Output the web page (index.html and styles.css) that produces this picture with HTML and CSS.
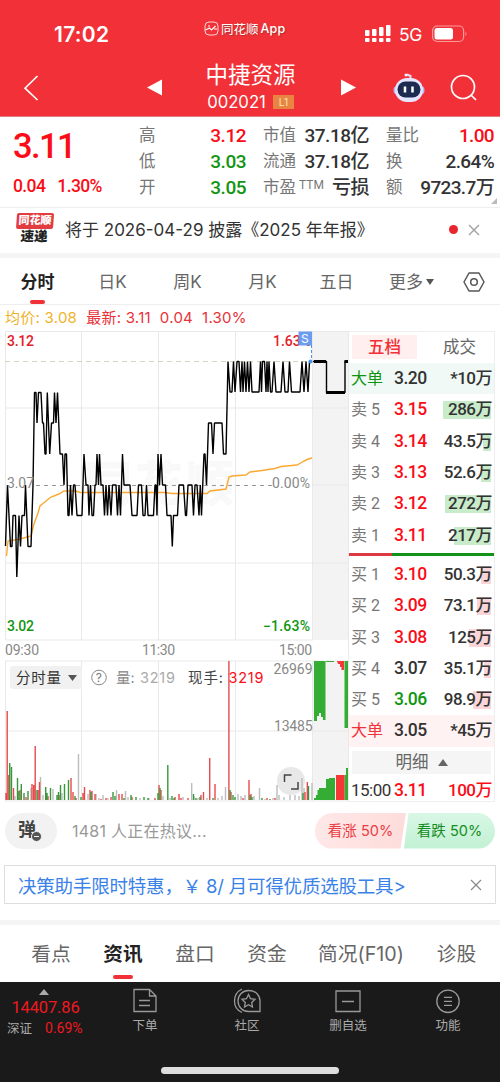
FILE: index.html
```html
<!DOCTYPE html>
<html lang="zh-CN">
<head>
    <meta charset="UTF-8">
    <meta name="viewport" content="width=device-width, initial-scale=1.0">
    <title>中捷资源 002021</title>
    <link rel="stylesheet" href="styles.css">
</head>
<body>
    <header class="header">
        <div class="status-bar">
            <span class="time">17:02</span>
            <span class="app-name">
                <svg width="15" height="15" viewBox="0 0 15 15" fill="none" stroke="#fff"><rect x="1" y="1" width="13" height="13" rx="4" stroke-width=".8"/><path d="M1.5 9l4-2 2 2 4-4M4 5h2M10 8h3" stroke-width="1.2"/></svg>
                同花顺<b>App</b>
            </span>
            <span class="signal">
                <svg width="26" height="18" viewBox="0 0 26 18" fill="#fff"><rect x="0" y="5" width="4.5" height="6" rx="1"/><rect x="7" y="4" width="4.5" height="7" rx="1"/><rect x="14" y="2" width="4.5" height="9" rx="1"/><rect x="21" y="0" width="4.5" height="11" rx="1"/><rect x="0" y="13" width="4.5" height="4" rx="1"/><rect x="7" y="13" width="4.5" height="4" rx="1"/><rect x="14" y="13" width="4.5" height="4" rx="1"/><rect x="21" y="13" width="4.5" height="4" rx="1"/></svg>
                <span class="net">5G</span>
                <svg width="36" height="18" viewBox="0 0 36 18"><rect x=".6" y="1" width="31" height="15.5" rx="4.5" fill="none" stroke="#f99a9d" stroke-width="1.2"/><rect x="2.5" y="3" width="18.5" height="11.5" rx="2.5" fill="#fff"/><path d="M33.5 6.5q2 2.3 0 4.6z" fill="#f99a9d"/></svg>
            </span>
        </div>
        <div class="nav">
            <svg class="back" width="16" height="28" viewBox="0 0 16 28" fill="none" stroke="#fff" stroke-width="1.6"><path d="M14.5 2L2 14.2 14.5 26"/></svg>
            <svg class="prev" width="15" height="17" viewBox="0 0 15 17" fill="#fff"><path d="M0 8.5L15 .5v16z"/></svg>
            <div class="stock">
                <h1>中捷资源</h1>
                <div class="code">002021<span>L1</span></div>
            </div>
            <svg class="next" width="15" height="17" viewBox="0 0 15 17" fill="#fff"><path d="M15 8.5L0 .5v16z"/></svg>
            <svg class="robot" width="32" height="30" viewBox="0 0 32 30"><path d="M17.5 6V3L14 1.5" fill="none" stroke="#e9dcfb" stroke-width="2"/><circle cx="13" cy="2" r="1.5" fill="#f6f3ff"/><rect x=".5" y="13" width="31" height="8.5" rx="4" fill="#bfb4fa"/><rect x="2" y="5" width="28" height="24" rx="12" fill="#e5e5ff"/><rect x="4.5" y="8.5" width="23" height="16" rx="8" fill="#1d2b50"/><path d="M12 13.5v6M19.5 13.5v6" stroke="#fff" stroke-width="2.5"/></svg>
            <svg class="search" width="28" height="28" viewBox="0 0 28 28" fill="none" stroke="#fff" stroke-width="1.7"><circle cx="13" cy="13" r="11.5"/><path d="M21 21l5 5"/></svg>
        </div>
    </header>

    <section class="quote">
        <div class="price">
            <div class="last">3.11</div>
            <div class="change"><span>0.04</span><span>1.30%</span></div>
        </div>
        <dl class="col-a">
            <dt>高</dt><dd class="red">3.12</dd>
            <dt>低</dt><dd class="green">3.03</dd>
            <dt>开</dt><dd class="green">3.05</dd>
        </dl>
        <dl class="col-b">
            <dt>市值</dt><dd>37.18亿</dd>
            <dt>流通</dt><dd>37.18亿</dd>
            <dt>市盈<sup>TTM</sup></dt><dd>亏损</dd>
        </dl>
        <dl class="col-c">
            <dt>量比</dt><dd class="red">1.00</dd>
            <dt>换</dt><dd>2.64%</dd>
            <dt>额</dt><dd>9723.7万</dd>
        </dl>
        <i class="corner"></i>
    </section>

    <section class="notice">
        <div class="badge"><b>同花顺</b><em>速递</em></div>
        <p>将于<span> 2026-04-29 </span>披露《2025<span> </span>年年报》</p>
        <i class="dot"></i>
        <svg width="12" height="12" viewBox="0 0 12 12" stroke="#a0a0a0" stroke-width="1.4"><path d="M1 1l10 10M11 1L1 11"/></svg>
    </section>

    <nav class="periods">
        <span class="active">分时</span>
        <span>日K</span>
        <span>周K</span>
        <span>月K</span>
        <span>五日</span>
        <span class="more">更多<i></i></span>
        <svg width="22" height="20" viewBox="0 0 22 20" fill="none" stroke="#555" stroke-width="1.5"><path d="M6 1h10l5 9-5 9H6l-5-9z" stroke-linejoin="round"/><circle cx="11" cy="10" r="3.3"/></svg>
    </nav>

    <div class="legend"><span class="avg">均价: 3.08</span><span>最新: 3.11</span><span>0.04</span><span>1.30%</span></div>

    <main class="market">
        <svg class="chart" width="349" height="472" viewBox="0 331 349 472">
            <!-- after-hours column -->
            <path d="M312.5 331H349v309h-36.5zM312.5 661H349v139h-36.5z" fill="#f3f3f4"/>
            <g fill="#f9f9f9" font-size="48" font-weight="900"><text x="84" y="501" textLength="150">同花顺</text></g>
            <g fill="none" stroke="#e9e9e9">
                <path d="M5 331.5h344M5 640h308M5 661h344M5 801h344M5.5 331v309M5.5 661v140M312.5 331v309M312.5 661v140M348.5 331v470"/>
                <path d="M81.5 331v309M158.5 331v309M235.5 331v309M5 408h344M5 563h344M81.5 661v140M158.5 661v140M235.5 661v140M5 731h344"/>
            </g>
            <path d="M5 361.5h306" stroke="#d3d6ba" stroke-dasharray="5 4"/>
            <path d="M36 485.5h236" stroke="#999" stroke-dasharray="4 4"/>
            <path d="M312 485h37" stroke="#e9e9e9"/>

            <path class="average" d="M6.5 556L8 541 20 539 31 536 34 524 38 513 40 506 46 501 51 497 59 494 64 491H76L80 492.5H165L172 493.5H207L210 491 226 489 229 477 232 476 246 475 250 472 262 470.5 275 468.5 281 466.5 297 465 303 461.5 307 459.5 312 458"/>
            <path class="price-line" d="M5.5 546L7.5 485 10.5 546.5H12L13 515.5H15.5L16.8 577 19 515.5 20.5 546.5 22 515.5H24.5L25.5 485 28 546.5H31L33 485 34.5 392.5H36L37 423 38.5 392.5H41L42.5 423H43.5L45 454H46L47.3 392.5 49.7 454 51.5 423H53.5L54.5 392.5 56 423 57.5 392.5 60 454H62.5L64 485 65 454H66.5L68 515.5H69L70.5 485 72 515.5 73.5 485H75L77 515.5H82L84 454 86 485H88L89 515.5 90.5 485 92 515.5H93.5L95 485H96L97 454 98.5 485 99.5 454 101 485H103L104.5 515.5 106 485 107.5 515.5 109 485 111 515.5 112.5 485 114 485 116 485 117.5 515.5 119 485 120.5 515.5 122.5 454 124 485H130L132 515.5H137L138.5 485H141.5L143 515.5H145L146.5 485 148 515.5H153.5L155 485H156L157 515.5 158 454 159.5 485 161 454 162.5 485H165.5L167 515.5H171L172.3 546.5 173.5 515.5H177.5L179 485H183.5L185.5 515.5H186.5L188 485H192L193.5 515.5 195 485H197L199 515.5 200.3 485 201.5 515.5 204 454H205L206.5 485 208.5 423H211.5L213 454 214.5 423H222L223.5 454H226L228 361.5 230 392H232L233.5 361.5 235 392 237 361.5H239L240.5 392 242 361.5 243 392 244.5 361.5 246 392 247.5 361.5 249 392 250.5 361.5 252 392H259L260.5 361.5 261.5 392 262.5 361.5H264.5L266 392 267 361.5 268 392 269 361.5 270.5 392H272L274 361.5 276 392H281L283 361.5 285 392H288L289.5 361.5 291.5 392H300L302 361.5 304 392 306 361.5 308 392 309.5 361.5"/>
            <path class="price-line" d="M313 361.5H326.5V392.5H345V361.5H348"/>
            <path d="M314 361.5h12M326 392.5h19M344.5 361.5h3.5" stroke="#000" stroke-width="3"/>
            <path d="M311.5 345v16" stroke="#4a90f5" stroke-dasharray="3 2"/>
            <circle cx="310.5" cy="361.5" r="2" fill="#4a90f5"/>

            <g class="scale">
                <text x="7" y="346" class="up" textLength="27">3.12</text>
                <text x="273" y="346" class="up" textLength="38">1.63%</text>
                <text x="7" y="488" textLength="27">3.07</text>
                <text x="272" y="488" textLength="38">0.00%</text>
                <text x="7" y="631" class="down" textLength="27">3.02</text>
                <text x="263" y="631" class="down" textLength="47">−1.63%</text>
                <text x="5" y="655" textLength="34">09:30</text>
                <text x="142" y="655" textLength="33">11:30</text>
                <text x="279" y="655" textLength="33">15:00</text>
            </g>
            <rect x="298.5" y="331.5" width="13.5" height="14" fill="#6a9df2"/>
            <text x="301" y="343" fill="#fff" font-size="12">S</text>

            <!-- volume -->
            <rect x="10" y="666" width="72" height="23" rx="3" fill="#f1f1f1"/>
            <g class="volume-head">
                <text x="16" y="683" fill="#333" textLength="45">分时量</text>
                <path d="M68 675h9l-4.5 6z" fill="#555"/>
                <circle cx="99" cy="677.5" r="7.3" fill="none" stroke="#888"/>
                <text x="95.7" y="682" fill="#777" font-size="12">?</text>
                <text x="116" y="683" fill="#888">量:</text>
                <text x="140" y="683" fill="#aaa" textLength="35">3219</text>
                <text x="188" y="683" fill="#444" textLength="35">现手:</text>
                <text x="228.5" y="683" fill="#fa0d17" textLength="35">3219</text>
            </g>
            <g class="scale">
                <text x="273.5" y="674" textLength="39">26969</text>
                <text x="274" y="731" textLength="38.5">13485</text>
            </g>
            <circle cx="291" cy="781" r="14" fill="#e8e8e8"/>
            <path d="M284.5 782v-7h7M298 782v7h-7" fill="none" stroke="#444" stroke-width="1.5"/>
            <path class="vol flat" d="M15 800v-4M31 800v-12M40.5 800v-23M43 800v-5M53 800v-11M62 800v-7M78.5 800v-46M88 800v-6M96 800v-6M99 800v-2M103 800v-5M108 800v-2M116.5 800v-10M125.5 800v-9M128 800v-3M140 800v-2M149 800v-2M163 800v-4M170 800v-2M183 800v-3M191.7 800v-17M194 800v-4M198 800v-2M207 800v-2M218 800v-2M222 800v-4M225.5 800v-13M238 800v-6M241 800v-4M245 800v-5M254 800v-4M259.5 800v-12M265 800v-1M273 800v-2M277 800v-15M279 800v-5M284 800v-3M290 800v-5M295 800v-5M299 800v-4M302 800v-22M304 800v-12M312 800v-17"/>
            <path class="vol buy" d="M6 800v-7M7.2 800v-89M8.8 800v-25M13.5 800v-12M20 800v-10M26 800v-3M32 800v-16M33.7 800v-15M35.2 800v-54M38 800v-10M39.5 800v-18M48 800v-4M59 800v-5M71 800v-22M73 800v-8M76 800v-2M83 800v-7M84.5 800v-13M90 800v-10M92 800v-9M95 800v-6M101 800v-1M106 800v-2M111 800v-3M119 800v-6M122 800v-6M132 800v-3M155 800v-2M159 800v-15M161 800v-10M175 800v-3M179 800v-6M181 800v-2M188 800v-2M201 800v-5M203.5 800v-8M209.7 800v-42M215 800v-16M228.9 800V661M231 800v-8M243 800v-2M249 800v-20M251 800v-6M267 800v-2M275 800v-2M305 800v-8M307.3 800v-18"/>
            <path class="vol sell" d="M9.7 800v-37M11.5 800v-33M17.5 800v-22M19 800v-9M21.3 800v-16M24 800v-7M28 800v-9M37 800v-10M45.7 800v-13M47 800v-7M50.5 800v-12M57 800v-5M58.5 800v-8M60.5 800v-15M64.5 800v-16M68.5 800v-20M75 800v-4M81 800v-3M91 800v-8M113 800v-8M115 800v-4M124 800v-2M131 800v-5M136 800v-3M144 800v-3M148 800v-2M158 800v-7M160 800v-12M167.8 800v-35M172 800v-4M174 800v-2M193.5 800v-6M196 800v-2M200 800v-3M213 800v-2M230 800v-10M233 800v-5M235 800v-3M250 800v-5M252 800v-3M262 800v-2M270 800v-1M303 800v-7M308.5 800v-14"/>
            <g fill="#35ad35">
                <path d="M314 661h11.5v59H323v-3h-2v-4h-2v3h-2v5h-3zM326 661h8v1h-8zM344.5 661h3.5v67h-3.5z"/>
                <path d="M314 800v-2h2v-3h1.5v-5h1.5v-2h7v-9h3v-1h6v22zM344.5 800v-25h1.5v-7h2v32z"/>
            </g>
            <path d="M337 661h7v9h-2.5v-3H340v-3h-2zM336 775h8.5v25H336z" fill="#f43737"/>
        </svg>

        <section class="book">
            <div class="book-tabs"><span class="active">五档</span><span>成交</span></div>
            <div class="row big sell-big"><span>大单</span><b>3.20</b><em>*10万</em></div>
            <div class="row ask"><span>卖 5</span><b class="red">3.15</b><em><i style="width: 48px"></i>286万</em></div>
            <div class="row ask"><span>卖 4</span><b class="red">3.14</b><em><i style="width: 8px"></i>43.5万</em></div>
            <div class="row ask"><span>卖 3</span><b class="red">3.13</b><em><i style="width: 10px"></i>52.6万</em></div>
            <div class="row ask"><span>卖 2</span><b class="red">3.12</b><em><i style="width: 46px"></i>272万</em></div>
            <div class="row ask"><span>卖 1</span><b class="red">3.11</b><em><i style="width: 37px"></i>217万</em></div>
            <div class="ratio"></div>
            <div class="row bid"><span>买 1</span><b class="red">3.10</b><em><i style="width: 10px"></i>50.3万</em></div>
            <div class="row bid"><span>买 2</span><b class="red">3.09</b><em><i style="width: 14px"></i>73.1万</em></div>
            <div class="row bid"><span>买 3</span><b class="red">3.08</b><em><i style="width: 22px"></i>125万</em></div>
            <div class="row bid"><span>买 4</span><b>3.07</b><em><i style="width: 7px"></i>35.1万</em></div>
            <div class="row bid"><span>买 5</span><b class="green">3.06</b><em><i style="width: 18px"></i>98.9万</em></div>
            <div class="row big buy-big"><span>大单</span><b>3.05</b><em>*45万</em></div>
            <div class="detail">明细<i></i></div>
            <div class="row tick"><span>15:00</span><b class="red">3.11</b><em class="red">100万</em></div>
        </section>
    </main>

    <section class="talk">
        <div class="danmu">弹<i></i></div>
        <p>1481<span> </span>人正在热议...</p>
        <div class="vote"><span class="rise">看涨 50%</span><span class="fall">看跌 50%</span></div>
    </section>

    <section class="promo">
        <span>决策助手限时特惠，￥ 8/ 月可得优质选股工具&gt;</span>
        <svg width="12" height="12" viewBox="0 0 12 12" stroke="#888" stroke-width="1.2"><path d="M1 1l10 10M11 1L1 11"/></svg>
    </section>

    <nav class="sections">
        <span>看点</span>
        <span class="active">资讯</span>
        <span>盘口</span>
        <span>资金</span>
        <span>简况(F10)</span>
        <span>诊股</span>
    </nav>

    <footer class="footer">
        <div class="tools">
            <div class="index">
                <i></i>
                <strong>14407.86</strong>
                <div><span>深证</span><b>0.69%</b></div>
            </div>
            <div class="tool">
                <svg width="26" height="26" viewBox="0 0 26 26"><path d="M2 1.5h15.5l6.5 6.5v15.5H2zM17.5 1.5v6.5h6.5M7 12.5h11M7 17.5h11"/></svg>
                <span>下单</span>
            </div>
            <div class="tool">
                <svg width="28" height="26" viewBox="0 0 28 26"><path d="M15.5 2.5C23 2.5 27 7.5 27 13v10.5H15.5a10.5 10.5 0 010-21zM9 1C-1 6-1 20 9 24.5M15.5 6.5l2 4.2 4.5.6-3.3 3.2.8 4.5-4-2.2-4 2.2.8-4.5L9 11.3l4.5-.6z"/></svg>
                <span>社区</span>
            </div>
            <div class="tool">
                <svg width="26" height="26" viewBox="0 0 26 26"><path d="M1 3h24v20.5H1zM7 13.5h12"/></svg>
                <span>删自选</span>
            </div>
            <div class="tool">
                <svg width="26" height="26" viewBox="0 0 26 26"><circle cx="13" cy="13.3" r="11.2"/><path d="M9 9.3h8M9 13.3h8M9 17.3h8"/></svg>
                <span>功能</span>
            </div>
        </div>
        <div class="home-bar"></div>
    </footer>
</body>
</html>
```

FILE: styles.css
```css
* {
    box-sizing: border-box;
}
body {
    width: 500px;
    height: 1083px;
    margin: 0;
    overflow: hidden;
    background: #fff;
    color: #333;
    font-family: Inter, "Noto Sans CJK SC", sans-serif;
    font-size: 16px;
}
h1, p, dl, dd {
    margin: 0;
}
i, em {
    font-style: normal;
}
svg {
    display: block;
    flex: none;
}
.red {
    color: #fa0d17;
}
.green {
    color: #109510;
}

/* header */
.header {
    height: 117px;
    background: #f23037;
    color: #fff;
    border-bottom: 1px solid #e08085;
}
.status-bar {
    display: grid;
    grid-template-columns: 204px 161px 1fr;
    height: 59px;
    padding-top: 9px;
    align-items: center;
}
.time {
    padding-left: 54px;
    font-size: 21px;
    font-weight: 600;
    letter-spacing: .3px;
}
.app-name {
    display: flex;
    align-items: center;
    gap: 2px;
    font-size: 12.5px;
    margin-top: -11px;
    text-shadow: 1px 1px 1px #a33;
}
.app-name b {
    font-weight: 500;
    letter-spacing: .2px;
}
.signal {
    display: flex;
    align-items: center;
}
.net {
    width: 25px;
    margin: 0 8px;
    font-size: 17.5px;
    letter-spacing: -.3px;
}
.nav {
    display: grid;
    grid-template-columns: 124px 55px 143px 70px 58px 1fr;
    height: 57px;
    align-items: center;
}
.back {
    margin-left: 23px;
}
.prev {
    margin-left: 23px;
}
.next {
    margin-left: 19px;
}
.robot {
    margin-left: 1px;
}
.stock {
    text-align: center;
}
.stock h1 {
    font-size: 22.5px;
    line-height: 29px;
    font-weight: 400;
}
.code {
    display: flex;
    justify-content: center;
    align-items: center;
    gap: 7px;
    font-size: 16.7px;
    line-height: 26px;
}
.code span {
    width: 21px;
    height: 14px;
    background: #e88543;
    color: #ffe4b0;
    font-size: 10px;
    line-height: 14px;
}

/* quote */
.quote {
    position: relative;
    display: grid;
    grid-template-columns: 139px 107px 123px 125px;
    height: 91px;
    padding-top: 6px;
    border-bottom: 1px solid #eee;
    font-family: Roboto, "Noto Sans CJK SC", sans-serif;
}
.price {
    padding-left: 13px;
    color: #fa0d17;
    font-weight: 500;
}
.last {
    height: 48px;
    font-size: 34.5px;
    line-height: 47px;
    letter-spacing: -1.6px;
}
.change {
    display: flex;
    gap: 12px;
    font-size: 17.5px;
    line-height: 30px;
    letter-spacing: -.6px;
}
.quote dl {
    display: grid;
    grid-template-columns: 34px 1fr;
    grid-template-rows: repeat(3, 26px);
    line-height: 26px;
}
.quote dt {
    font-size: 16.5px;
    color: #777;
    white-space: nowrap;
}
.quote dd {
    font-size: 19px;
    font-weight: 500;
    text-align: right;
    letter-spacing: -.5px;
    white-space: nowrap;
}
.quote .col-b, .quote .col-c {
    padding-left: 17px;
}
.quote sup {
    font-size: 12px;
    line-height: 0;
    margin-left: 3px;
    vertical-align: 4px;
}
.quote .col-c dd {
    letter-spacing: -.65px;
}
.corner {
    position: absolute;
    right: 3px;
    bottom: 3px;
    border: 3px solid;
    border-color: transparent #bbb #bbb transparent;
}

/* notice */
.notice {
    display: flex;
    align-items: center;
    height: 50px;
    padding: 0 20px 5px 16px;
    border-bottom: 5px solid #f5f5f6;
}
.badge {
    width: 37px;
    text-align: center;
    transform: skewX(-4deg);
}
.badge b, .badge em {
    display: block;
    font-weight: 900;
    line-height: 15px;
}
.badge b {
    height: 16px;
    background: #e23b40;
    border-radius: 2px;
    color: #fff;
    font-size: 11px;
}
.badge em {
    font-size: 13.5px;
    color: #222;
}
.notice p {
    flex: 1;
    margin-left: 12px;
    font-size: 17px;
    white-space: nowrap;
}
.dot {
    width: 9px;
    height: 9px;
    border-radius: 50%;
    background: #e8252d;
    margin: 2px 10px 0 0;
}
.notice svg {
    margin-top: 3px;
}

/* period tabs */
.periods {
    display: grid;
    grid-template-columns: 75px 75px 75px 75px 73px 77px 1fr;
    align-items: center;
    height: 47px;
    border-bottom: 1px solid #eee;
    text-align: center;
    font-size: 17px;
    color: #666;
}
.periods span {
    position: relative;
    line-height: 46px;
    padding-top: 1px;
}
.periods svg {
    margin-left: 13px;
}
.periods .active, .sections .active {
    color: #222;
    font-weight: 600;
}
.periods .active::after, .sections .active::after {
    content: "";
    position: absolute;
    left: 30px;
    bottom: 1px;
    width: 15px;
    height: 4px;
    border-radius: 2px;
    background: #f23037;
}
.more i {
    display: inline-block;
    margin: 0 0 3px 3px;
    border: 4.5px solid transparent;
    border-top: 6px solid #555;
    border-bottom: 0;
}
.legend {
    display: flex;
    height: 26px;
    padding-left: 5px;
    font-size: 15px;
    line-height: 26px;
    letter-spacing: .25px;
    color: #e83239;
    gap: 9px;
}
.avg {
    color: #eeb32c;
}

/* chart */
.market {
    display: flex;
    height: 471px;
}
.chart text {
    font-family: Inter, "Noto Sans CJK SC", sans-serif;
}
.chart .price-line {
    fill: none;
    stroke: #000;
    stroke-width: 1.4;
    stroke-linejoin: bevel;
}
.chart .average {
    fill: none;
    stroke: #f9a933;
    stroke-width: 1.4;
}
.chart .scale text {
    font: 14px Roboto, sans-serif;
    fill: #888;
}
.chart .scale .up {
    fill: #e3202a;
    font-weight: 500;
}
.chart .scale .down {
    fill: #109510;
    font-weight: 500;
}
.volume-head {
    font-size: 14.5px;
}
.vol {
    stroke-width: 1.4;
}
.vol.flat {
    stroke: #bcbcbc;
}
.vol.buy {
    stroke: #e84a4d;
}
.vol.sell {
    stroke: #37983b;
}

/* order book */
.book {
    width: 146px;
    border: 1px solid #eee;
    border-left: 0;
    font-family: Roboto, "Noto Sans CJK SC", sans-serif;
}
.book-tabs {
    display: flex;
    height: 31px;
    padding: 3px 0 0 3px;
    color: #666;
    font-size: 16.5px;
    line-height: 25px;
    text-align: center;
}
.book-tabs span {
    width: 65px;
    height: 24px;
    margin-right: 10px;
}
.book-tabs span + span {
    margin-right: 0;
}
.book-tabs .active {
    background: #ffefef;
    color: #f23037;
    font-weight: 500;
}
.row {
    display: grid;
    grid-template-columns: 43px 39px 1fr;
    align-items: center;
    height: 31.3px;
    padding: 0 2px;
    line-height: 31px;
    white-space: nowrap;
    color: #333;
}
.row span {
    font-size: 16px;
    color: #777;
}
.row b {
    font-size: 17.5px;
    font-weight: 500;
    letter-spacing: -.5px;
}
.row em {
    position: relative;
    z-index: 0;
    font-size: 17px;
    font-weight: 500;
    text-align: right;
    letter-spacing: -.5px;
}
.row em i {
    position: absolute;
    z-index: -1;
    right: 1px;
    top: 7px;
    height: 18px;
}
.ask i {
    background: #c8ebca;
}
.bid i {
    background: #fbd5d7;
}
.sell-big {
    background: #f0f9f5;
}
.row.sell-big span {
    color: #109510;
}
.buy-big {
    background: #fef2f2;
}
.row.buy-big span {
    color: #f23037;
}
.ratio {
    height: 3px;
    margin: 2px 0 3px;
    background: linear-gradient(90deg, #dc3a43 43px, #139218 43px);
}
.detail {
    height: 23px;
    margin: 4px 3px;
    background: #f5f5f5;
    color: #666;
    font-size: 16.5px;
    line-height: 23px;
    text-align: center;
}
.detail i {
    display: inline-block;
    margin: 0 0 2px 9px;
    border: 5px solid transparent;
    border-bottom: 7px solid #666;
    border-top: 0;
}
.row.tick {
    height: 24px;
    line-height: 24px;
}
.row.tick span {
    color: #333;
    font-size: 17px;
    letter-spacing: -.5px;
}
.row .red {
    color: #fa0d17;
}
.row .green {
    color: #109510;
}

/* discussion */
.talk {
    display: flex;
    align-items: center;
    height: 63px;
    padding: 0 5px 6px;
}
.danmu {
    position: relative;
    width: 52px;
    height: 36px;
    border-radius: 18px;
    background: #f2f2f2;
    padding-left: 13px;
    font-size: 18px;
    font-weight: 700;
    line-height: 33px;
    color: #444;
}
.danmu i {
    position: absolute;
    left: 26px;
    top: 18px;
    width: 11px;
    height: 11px;
    border: 1px solid #f2f2f2;
    border-radius: 50%;
    background: linear-gradient(#f2f2f2, #f2f2f2) center / 5px 1px no-repeat #555;
}
.talk p {
    flex: 1;
    margin: -2px 0 0 15px;
    font-size: 16px;
    letter-spacing: .25px;
    color: #999;
}
.vote {
    display: flex;
    gap: 3px;
    border-radius: 18px;
    overflow: hidden;
    font-size: 14.5px;
    line-height: 36px;
    white-space: nowrap;
}
.rise, .fall {
    height: 36px;
    width: 91px;
    text-align: center;
}
.rise {
    background: linear-gradient(100deg, #ffe8e8, #fddcda);
    color: #eb3d43;
    clip-path: polygon(0 0, 100% 0, 94% 100%, 0 100%);
}
.fall {
    margin-left: -5px;
    background: linear-gradient(#d9f7e5, #c1f1d3);
    color: #158d22;
    clip-path: polygon(5% 0, 100% 0, 100% 100%, 0 100%);
}
.promo {
    display: flex;
    justify-content: space-between;
    align-items: center;
    height: 39px;
    margin: 0 4px 16px;
    padding: 0 13px;
    border: 1px solid #dedede;
    color: #3a82e8;
    font-size: 18.5px;
    letter-spacing: -.2px;
    white-space: nowrap;
}

/* section tabs */
.sections {
    display: grid;
    grid-template-columns: 72px 72px 72px 72px 116px 1fr;
    height: 62px;
    padding: 0 6px 0 15px;
    border-top: 5px solid #f5f5f6;
    text-align: center;
    font-size: 19.7px;
    line-height: 58px;
    color: #666;
}
.sections span {
    position: relative;
    white-space: nowrap;
}
.sections .active::after {
    left: 26px;
    bottom: 4px;
    width: 20px;
}

/* footer */
.footer {
    height: 100px;
    background: #1a1a1a;
    color: #aaa;
}
.tools {
    display: grid;
    grid-template-columns: 94px 102px 102px 100px 100px;
    height: 84px;
}
.index {
    text-align: center;
    color: #f01820;
    font-family: Roboto, "Noto Sans CJK SC", sans-serif;
}
.index > i {
    display: block;
    width: 0;
    margin: 7px auto 0 39px;
    border: 5.5px solid transparent;
    border-bottom: 6px solid #aaa;
    border-top: 0;
}
.index strong {
    display: block;
    padding-right: 3px;
    font-size: 16.5px;
    font-weight: 400;
    line-height: 26px;
    letter-spacing: -.15px;
}
.index div {
    display: flex;
    gap: 13px;
    padding-left: 7px;
    font-size: 14px;
    line-height: 15px;
}
.index span {
    font-size: 12.5px;
    color: #aaa;
}
.index b {
    font-weight: 400;
}
.tool {
    display: flex;
    flex-direction: column;
    align-items: center;
    padding-top: 6px;
    font-size: 12.5px;
    line-height: 23px;
}
.tool svg {
    fill: none;
    stroke: #999;
    stroke-width: 1.3;
}
.home-bar {
    width: 178px;
    height: 7px;
    margin: 1px auto 0;
    border-radius: 4px;
    background: #ddd;
}
```
